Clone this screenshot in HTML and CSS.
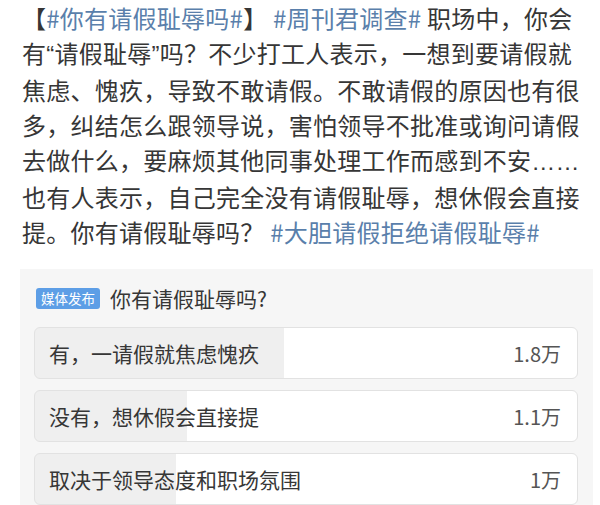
FILE: index.html
```html
<!DOCTYPE html>
<html lang="zh-CN">

<head>
  <meta charset="UTF-8">
  <meta name="viewport" content="width=device-width, initial-scale=1.0">
  <title>你有请假耻辱吗</title>
  <link rel="stylesheet" href="styles.css">
</head>

<body>
  <div class="post">
    <p class="post-text">
      【<span class="tag">#你有请假耻辱吗#</span>】 <span class="tag">#周刊君调查#</span> 职场中，你会<br>
      有<span class="latin">“</span>请假耻辱<span class="latin">”</span>吗？不少打工人表示，一想到要请假就<br>
      焦虑、愧疚，导致不敢请假。不敢请假的原因也有很<br>
      多，纠结怎么跟领导说，害怕领导不批准或询问请假<br>
      去做什么，要麻烦其他同事处理工作而感到不安<span class="latin">……</span><br>
      也有人表示，自己完全没有请假耻辱，想休假会直接<br>
      提。你有请假耻辱吗？ <span class="tag">#大胆请假拒绝请假耻辱#</span>
    </p>
  </div>

  <div class="poll">
    <div class="poll-head">
      <span class="badge">媒体发布</span>
      <span class="poll-title">你有请假耻辱吗?</span>
    </div>

    <div class="option" style="--p: 46%;">
      <span class="option-label">有，一请假就焦虑愧疚</span>
      <span class="option-count">1.8万</span>
    </div>
    <div class="option" style="--p: 28%;">
      <span class="option-label">没有，想休假会直接提</span>
      <span class="option-count">1.1万</span>
    </div>
    <div class="option" style="--p: 26%;">
      <span class="option-label">取决于领导态度和职场氛围</span>
      <span class="option-count">1万</span>
    </div>
  </div>
</body>
</html>
```

FILE: styles.css
```css
body {
  font-family: "Noto Sans CJK SC", "Noto Sans", sans-serif;
  margin: 0;
  padding: 0;
  background-color: #ffffff;
  color: #363636;
  overflow: hidden;
}

.post {
  padding: 0 0 0 22px;
}

.post-text {
  margin: 0;
  font-size: 24px;
  line-height: 35px;
  letter-spacing: 0.25px;
  white-space: nowrap;
}

.latin {
  font-family: "Liberation Sans", sans-serif;
}

.tag {
  color: #5a7fab;
}

.poll {
  margin: 20px 7px 0 20px;
  padding: 14px 15px 14px 14px;
  background-color: #f6f6f6;
}

.poll-head {
  display: flex;
  align-items: center;
  height: 30px;
  margin-bottom: 14px;
}

.badge {
  margin-left: 2px;
  padding: 0 5px;
  height: 21px;
  line-height: 21px;
  font-size: 13.5px;
  color: #ffffff;
  background-color: #5d9ee6;
  border-radius: 3px;
}

.poll-title {
  margin-left: 10px;
  font-size: 21px;
}

.option {
  display: flex;
  align-items: center;
  justify-content: space-between;
  height: 50px;
  margin-bottom: 11px;
  padding: 0 16px 0 14px;
  border: 1px solid #e2e2e2;
  border-radius: 6px;
  background: linear-gradient(to right, #efefef var(--p), #ffffff var(--p));
}

.option-label {
  font-size: 21px;
  color: #363636;
}

.option-count {
  font-size: 20px;
  color: #555555;
}
```
